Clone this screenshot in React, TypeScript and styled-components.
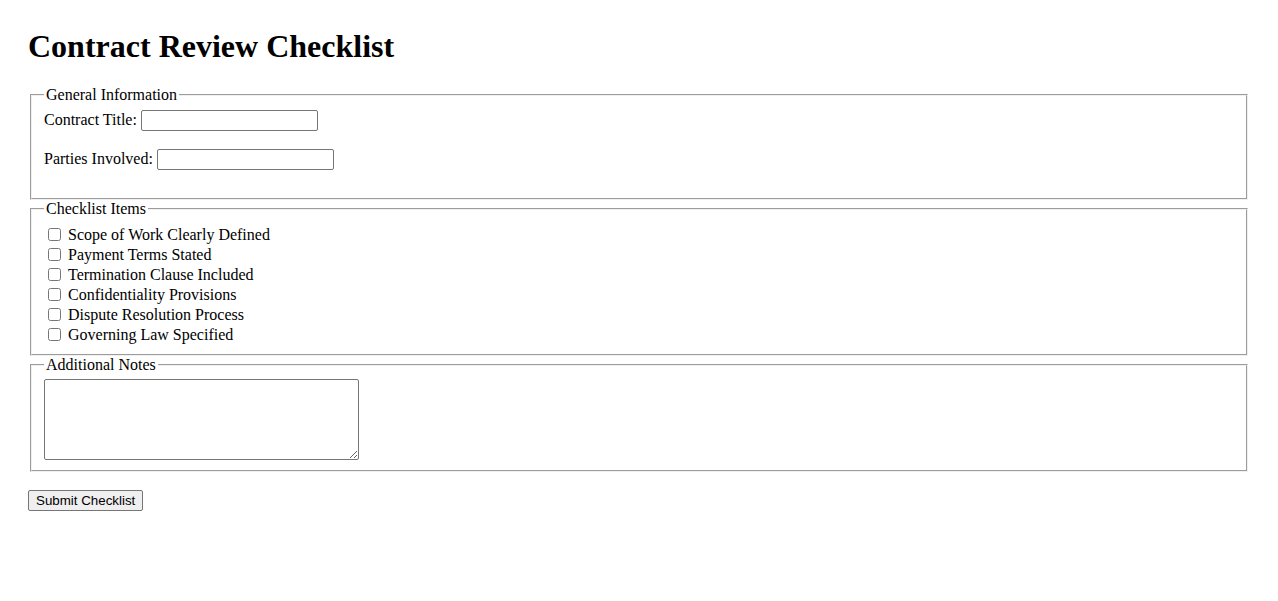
import { createGlobalStyle } from "styled-components";
import styled from "styled-components";

const GlobalStyle = createGlobalStyle`
  body {
    margin: 0;
    background: #ffffff;
    color: #000000;
    font-family: "Liberation Serif", "Times New Roman", serif;
    font-size: 16px;
  }
`;

const Page = styled.form`
  padding: 28px;
`;

const Title = styled.h1`
  margin: 0 0 21.44px;
  font-size: 32px;
  font-weight: bold;
  line-height: normal;
`;

const Section = styled.fieldset<{ $bottom?: number }>`
  margin: 0 2px;
  padding: 0.35em 0.75em ${(p) => p.$bottom ?? 10}px;
  border: 2px groove rgb(240, 240, 240);
`;

const Legend = styled.legend`
  padding: 0 2px;
`;

const Field = styled.div`
  display: flex;
  align-items: baseline;
  gap: 4px;
  height: 21px;
  margin-bottom: 18px;
`;

const TextInput = styled.input`
  box-sizing: border-box;
  width: 177px;
  height: 21px;
  margin: 0;
  padding: 1px 2px;
  border: 1px solid #767676;
  border-radius: 2px;
  font-family: "Liberation Sans", Arial, sans-serif;
  font-size: 13.33px;
`;

const Checklist = styled.div`
  padding-top: 1px;
`;

const CheckRow = styled.div`
  display: flex;
  align-items: center;
  height: 20px;
  line-height: 20px;
`;

const Check = styled.input`
  width: 13px;
  height: 13px;
  margin: 3px 3px 3px 4px;
`;

const CheckLabel = styled.label`
  margin-left: 4px;
`;

const Notes = styled.textarea`
  display: block;
  box-sizing: border-box;
  width: 315px;
  height: 81px;
  margin: 0;
  padding: 2px;
  border: 1px solid #767676;
  border-radius: 2px;
  font-family: "Liberation Mono", monospace;
  font-size: 13.33px;
`;

const SubmitButton = styled.button`
  display: block;
  margin-top: 18px;
  height: 21px;
  padding: 1px 7px;
  border: 1px solid #767676;
  border-radius: 2px;
  background: #efefef;
  color: #000000;
  font-family: "Liberation Sans", Arial, sans-serif;
  font-size: 13.33px;
`;

const items = [
  "Scope of Work Clearly Defined",
  "Payment Terms Stated",
  "Termination Clause Included",
  "Confidentiality Provisions",
  "Dispute Resolution Process",
  "Governing Law Specified",
];

export default function App() {
  return (
    <>
      <GlobalStyle />
      <Page onSubmit={(e) => e.preventDefault()}>
        <Title>Contract Review Checklist</Title>

        <Section>
          <Legend>General Information</Legend>
          <Field>
            <label htmlFor="title">Contract Title:</label>
            <TextInput id="title" type="text" />
          </Field>
          <Field>
            <label htmlFor="parties">Parties Involved:</label>
            <TextInput id="parties" type="text" />
          </Field>
        </Section>

        <Section $bottom={9}>
          <Legend>Checklist Items</Legend>
          <Checklist>
            {items.map((item, i) => (
              <CheckRow key={item}>
                <Check type="checkbox" id={`item-${i}`} />
                <CheckLabel htmlFor={`item-${i}`}>{item}</CheckLabel>
              </CheckRow>
            ))}
          </Checklist>
        </Section>

        <Section>
          <Legend>Additional Notes</Legend>
          <Notes />
        </Section>

        <SubmitButton type="submit">Submit Checklist</SubmitButton>
      </Page>
    </>
  );
}
